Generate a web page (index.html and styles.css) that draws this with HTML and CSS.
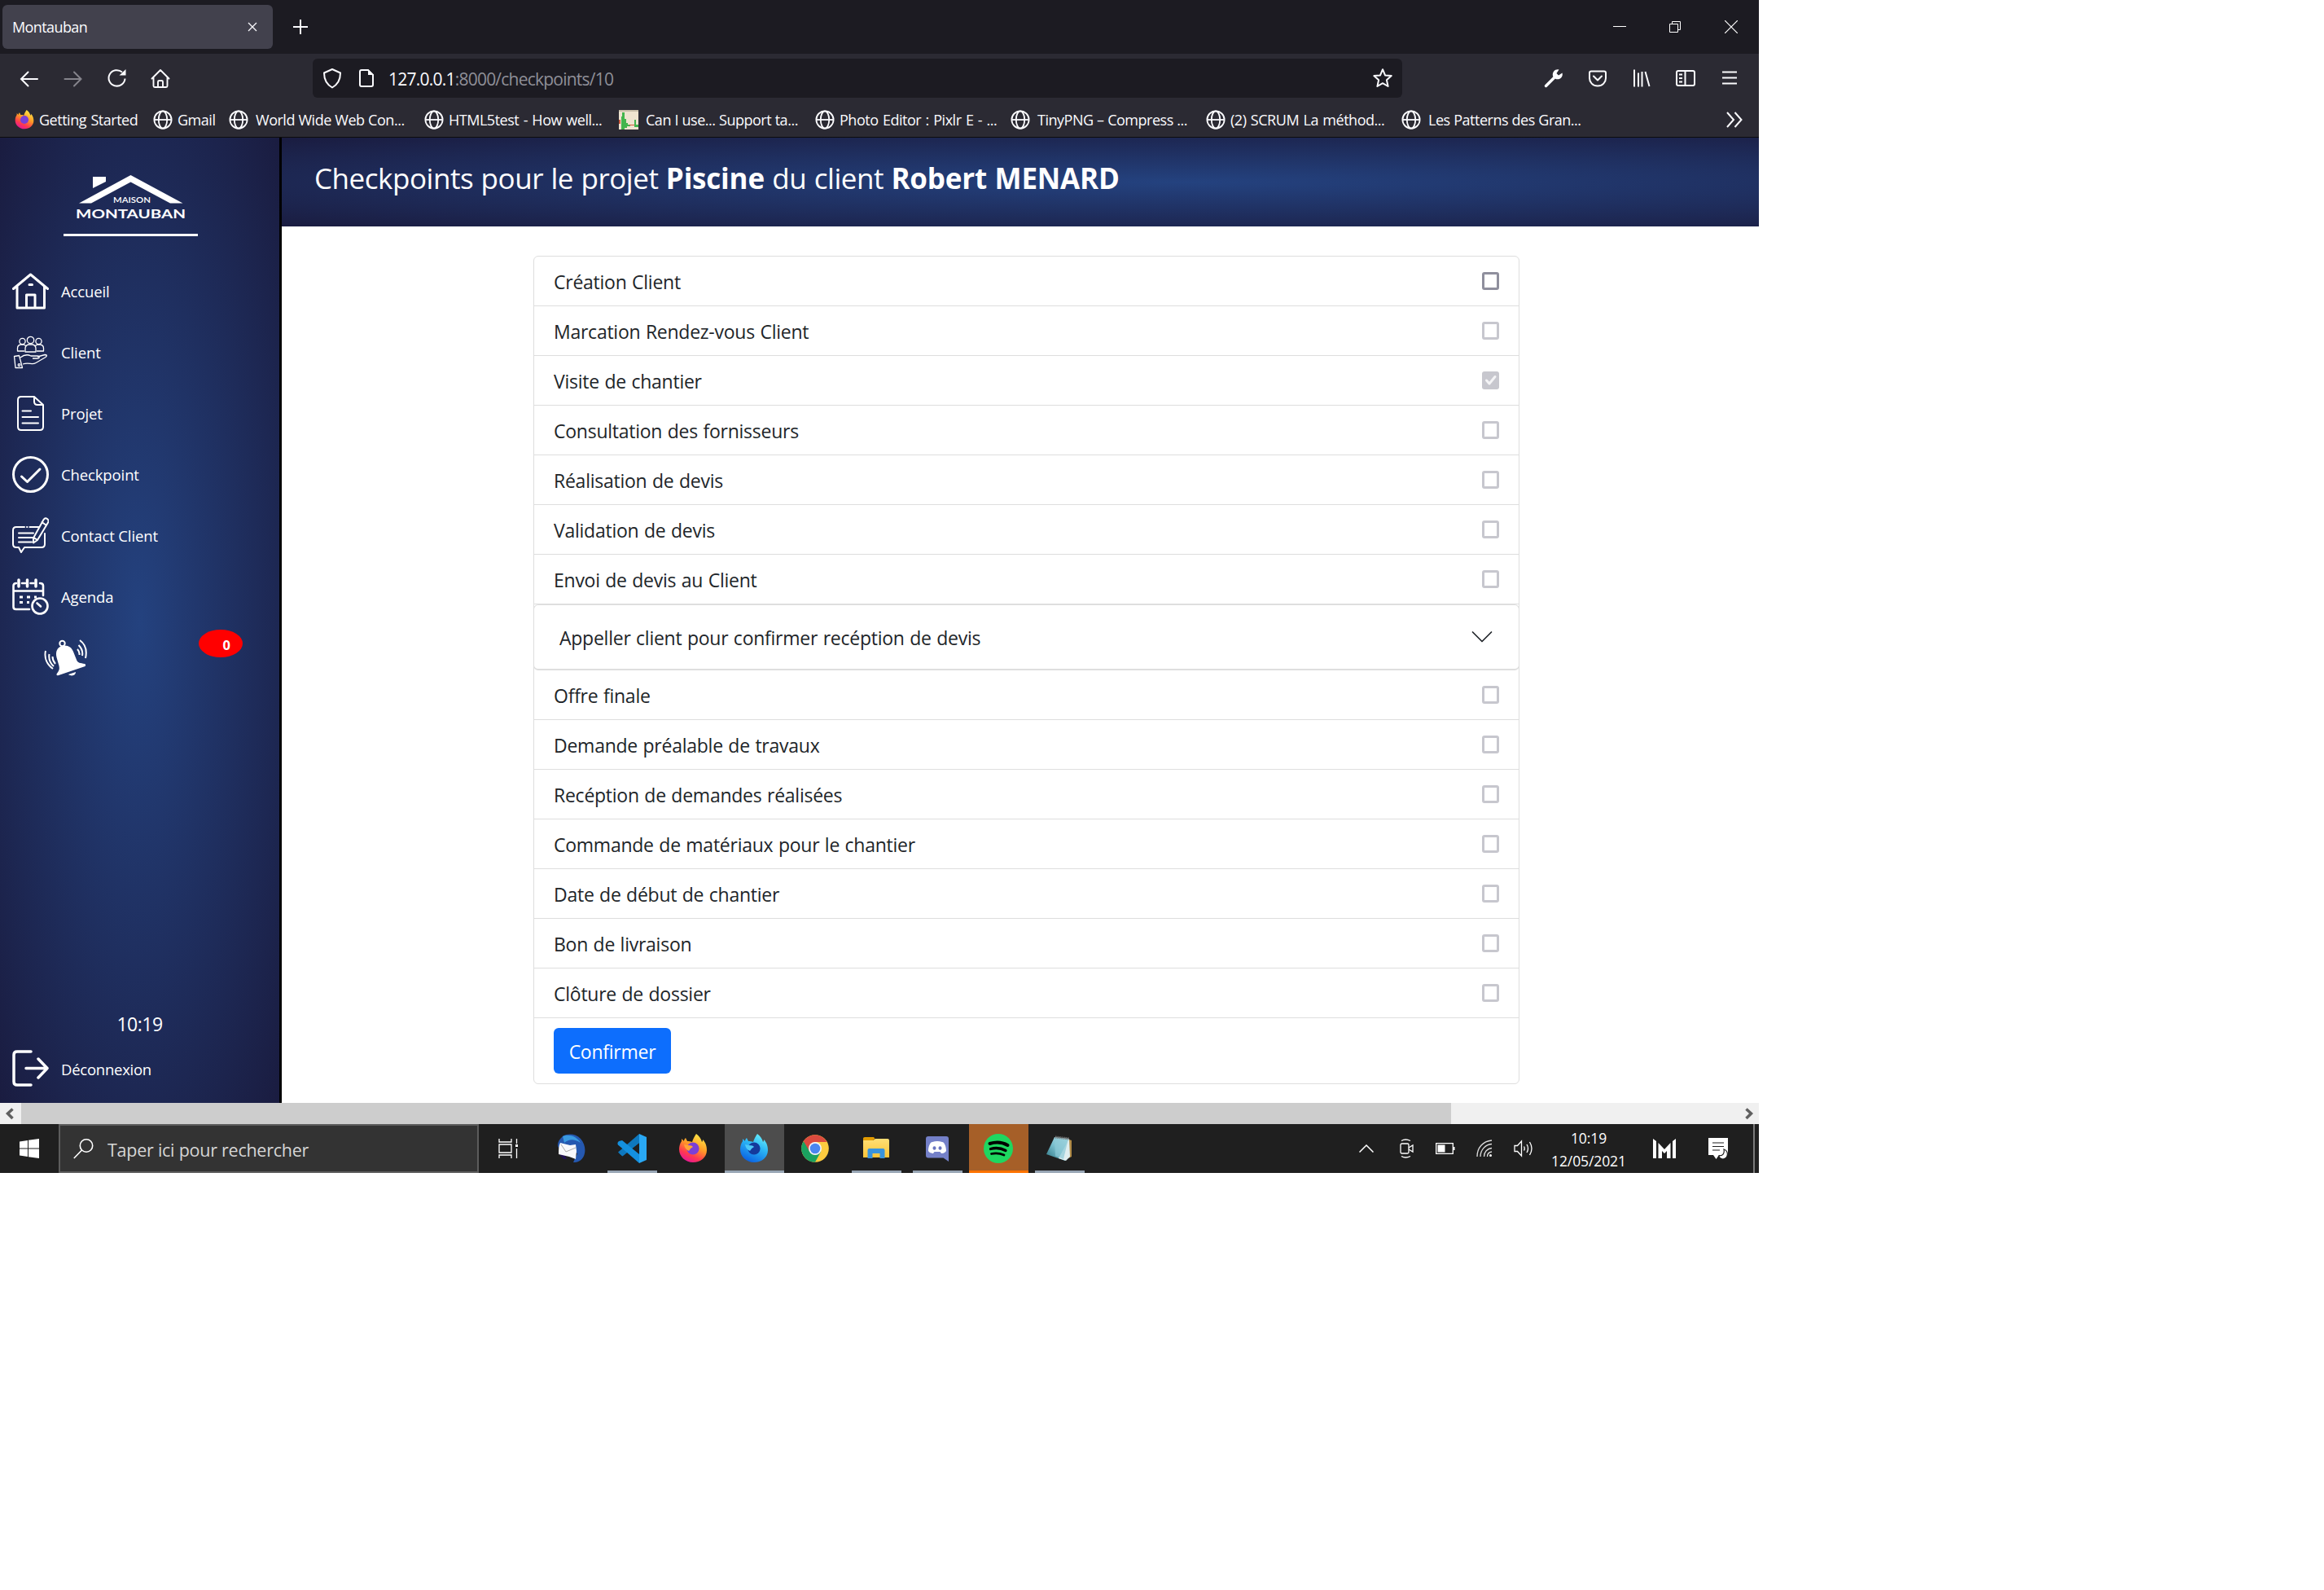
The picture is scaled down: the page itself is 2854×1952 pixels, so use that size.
FILE: index.html
```html
<!DOCTYPE html>
<html lang="fr">
<head>
<meta charset="utf-8">
<title>Montauban</title>
<link rel="stylesheet" href="styles.css">
</head>
<body>
<svg class="defs" width="0" height="0" aria-hidden="true">
  <defs>
    <linearGradient id="fire" x1=".8" y1="0" x2=".3" y2="1"><stop offset="0" stop-color="#fff04a"/><stop offset=".45" stop-color="#ff9a26"/><stop offset=".75" stop-color="#ff3a4e"/><stop offset="1" stop-color="#e5149a"/></linearGradient>
    <linearGradient id="ice" x1=".8" y1="0" x2=".3" y2="1"><stop offset="0" stop-color="#6df3fb"/><stop offset=".45" stop-color="#2ab4f5"/><stop offset="1" stop-color="#0a5fe0"/></linearGradient>
    <linearGradient id="pad" x1="1" y1="0" x2="0" y2="1"><stop offset="0" stop-color="#c9eaf0"/><stop offset=".5" stop-color="#7cc0cf"/><stop offset="1" stop-color="#27717f"/></linearGradient>
    <linearGradient id="fold" x1="0" y1="0" x2="0" y2="1"><stop offset="0" stop-color="#ffdf75"/><stop offset="1" stop-color="#fcc438"/></linearGradient>
    <symbol id="globe" viewBox="0 0 24 24"><g fill="none" stroke="#fbfbfe" stroke-width="1.8"><circle cx="12" cy="12" r="10.6"/><ellipse cx="12" cy="12" rx="5.2" ry="10.6"/><path d="M1.4 12h21.2"/></g></symbol>
    <symbol id="fox" viewBox="0 0 36 36">
      <path d="M22 0c4 3 6 6 7 10 1-1 1-2 1-3 4 4 5 9 5 13 0 9-8 15-17 15S1 28 1 19c0-4 1-7 3-10V6l3 3c0-2 1-3 2-4l2 4c2 0 4 0 6 1 1-4 3-7 5-10z"/>
    </symbol>
    <symbol id="foxcore" viewBox="0 0 36 36"><circle cx="18" cy="18" r="7.6"/></symbol>
  </defs>
</svg>
<div class="desktop">
  <div class="browser">
    <div class="tabbar">
      <div class="tab"><span>Montauban</span>
        <svg width="12" height="12" viewBox="0 0 12 12"><path d="M1 1l10 10M11 1L1 11" stroke="#fbfbfe" stroke-width="1.3"/></svg>
      </div>
      <svg class="newtab" width="18" height="18" viewBox="0 0 18 18"><path d="M9 0v18M0 9h18" stroke="#fbfbfe" stroke-width="2"/></svg>
      <div class="winctl">
        <svg width="16" height="16" viewBox="0 0 16 16"><path d="M0 7.500h16" stroke="#fff"/></svg>
        <svg width="16" height="16" viewBox="0 0 16 16"><path d="M.5 4.500h10v10h-10zM3.500 4.500v-3h10v10h-3" fill="none" stroke="#fff"/></svg>
        <svg width="16" height="16" viewBox="0 0 16 16"><path d="M0 0l16 16M16 0L0 16" stroke="#fff" stroke-width="1.2"/></svg>
      </div>
    </div>
    <div class="navbar">
      <div class="navbtns">
        <svg width="24" height="24" viewBox="0 0 24 24" fill="none" stroke="#fbfbfe" stroke-width="2" stroke-linecap="round"><path d="M22 13H2M10.500 4.500L2 13l8.500 8.500"/></svg>
        <svg width="24" height="24" viewBox="0 0 24 24" fill="none" stroke="#85848c" stroke-width="2" stroke-linecap="round"><path d="M1.500 13h20M13 4.500l8.500 8.500-8.500 8.500"/></svg>
        <svg width="24" height="24" viewBox="0 0 24 24" fill="none" stroke="#fbfbfe" stroke-width="2"><path d="M22.500 12.500A10 9.700 0 1 1 19 4.500"/><path d="M23.500 1v7.500h-8z" fill="#fbfbfe" stroke="none"/></svg>
        <svg width="24" height="24" viewBox="0 0 24 24" fill="none" stroke="#fbfbfe" stroke-width="1.900" stroke-linejoin="round" stroke-linecap="round"><path d="M1.500 12.500L12 2l10.500 10.500M3.500 11v10.500q0 1.500 1.500 1.500h14q1.500 0 1.500-1.500V11M9 23v-6.500q0-1.500 1.500-1.500h3q1.500 0 1.500 1.500V23"/></svg>
      </div>
      <div class="urlbar">
        <svg width="24" height="26" viewBox="0 0 24 26"><path d="M12 2L22 6.500c0 8-3 14-10 18C5 20.500 2 14.500 2 6.500z" fill="none" stroke="#fbfbfe" stroke-width="2" stroke-linejoin="round"/></svg>
        <svg class="doc" width="20" height="24" viewBox="0 0 20 24"><path d="M12 2H4Q2 2 2 4v16q0 2 2 2h12q2 0 2-2V8z" fill="none" stroke="#fbfbfe" stroke-width="2"/><path d="M12 1v7h7z" fill="#fbfbfe"/></svg>
        <span class="url"><b>127.0.0.1</b>:8000/checkpoints/10</span>
        <svg class="star" width="26" height="26" viewBox="0 0 26 26"><path d="M13 2.200l3 7.200 7.700.7-5.800 5.200 1.700 7.700L13 19.200 6.400 23l1.700-7.700-5.800-5.200 7.700-.7z" fill="none" stroke="#fbfbfe" stroke-width="2" stroke-linejoin="round"/></svg>
      </div>
      <div class="tools">
        <svg width="24" height="24" viewBox="0 0 24 24"><path d="M2.500 21.500L13 11" stroke="#fbfbfe" stroke-width="3.500" stroke-linecap="round"/><path d="M18.500 1.500l-3 4.500 2.500 2.500L22.500 5.500c1.500 5-3 9-8 7.500l-3.500-3.500C10 4 14 .500 18.500 1.500z" fill="#fbfbfe"/></svg>
        <svg width="24" height="24" viewBox="0 0 24 24" fill="none" stroke="#fbfbfe" stroke-width="2" stroke-linecap="round" stroke-linejoin="round"><path d="M4 3.500h16q2 0 2 2V12c0 5-4 9.500-10 9.500S2 17 2 12V5.500q0-2 2-2zM7 9.500l5 5 5-5"/></svg>
        <svg width="24" height="24" viewBox="0 0 24 24" fill="none" stroke="#fbfbfe" stroke-width="2"><path d="M3 1.500v21M8 5.500v17M12.500 4v18.500M16.500 4l5 18"/></svg>
        <svg width="26" height="24" viewBox="0 0 26 24" fill="none" stroke="#fbfbfe" stroke-width="2"><rect x="1" y="3" width="22" height="18" rx="2"/><path d="M11.500 3v18M4 7.500h4M4 12h4M4 16.500h4"/></svg>
        <svg width="24" height="24" viewBox="0 0 24 24"><path d="M1 4.500h18M1 11.500h18M1 18.500h18" stroke="#fbfbfe" stroke-width="2"/></svg>
      </div>
    </div>
    <div class="bookmarks">
      <a><svg width="24" height="24"><use href="#fox" fill="url(#fire)"/><use href="#foxcore" fill="#7b3fd6"/></svg><span>Getting Started</span></a>
      <a><svg width="24" height="24"><use href="#globe"/></svg><span>Gmail</span></a>
      <a class="wide"><svg width="24" height="24"><use href="#globe"/></svg><span>World Wide Web Con...</span></a>
      <a><svg width="24" height="24"><use href="#globe"/></svg><span>HTML5test - How well...</span></a>
      <a class="wide"><svg width="24" height="24" viewBox="0 0 24 24"><path fill="#eee3cf" d="M0 0h24v24H0z"/><path fill="#c8bda8" d="M0 0h24v2H0z"/><path fill="#43b54d" d="M3 24V8h1V3h3v8h2v5h2v2h3v2h-4v2H7v2zM19 20v-8h2v6h3v3h-5z"/><path fill="#cf5a3c" d="M0 12h2v5H0zM13 18h6v1h-6z"/></svg><span>Can I use... Support ta...</span></a>
      <a><svg width="24" height="24"><use href="#globe"/></svg><span>Photo Editor : Pixlr E - ...</span></a>
      <a class="wide"><svg width="24" height="24"><use href="#globe"/></svg><span>TinyPNG – Compress ...</span></a>
      <a><svg width="24" height="24"><use href="#globe"/></svg><span>(2) SCRUM La méthod...</span></a>
      <a class="wide"><svg width="24" height="24"><use href="#globe"/></svg><span>Les Patterns des Gran...</span></a>
      <svg class="more" width="20" height="20" viewBox="0 0 20 20"><path d="M1 1l8 9-8 9M10.500 1l8 9-8 9" fill="none" stroke="#fbfbfe" stroke-width="2"/></svg>
    </div>
  </div>

  <div class="page">
    <aside class="sidebar">
      <svg class="logo" width="170" height="80" viewBox="0 0 170 80">
        <path d="M36 4h16v6L36 18z" fill="#fff"/>
        <path d="M82.500 2l64 34.500h-15.500L82.500 10.500 34 36.500H19z" fill="#fff"/>
        <text x="84" y="35.500" text-anchor="middle" textLength="46" lengthAdjust="spacingAndGlyphs" class="logo-sm">MAISON</text>
        <text x="82.500" y="54.500" text-anchor="middle" textLength="135" lengthAdjust="spacingAndGlyphs" class="logo-lg">MONTAUBAN</text>
        <path d="M0 75.500h165" stroke="#fff" stroke-width="3"/>
      </svg>
      <nav class="menu">
        <a><svg width="45" height="45" viewBox="0 0 45 45" fill="none" stroke="#fff" stroke-width="3" stroke-linecap="round" stroke-linejoin="round"><path d="M1.500 19.500L22.500 2l21 17.500M6 17v26h33.500V17M17.500 43V27h10.500v16M21 14.500h3.500"/></svg><span>Accueil</span></a>
        <a><svg width="45" height="45" viewBox="0 0 45 45" fill="none" stroke="#fff" stroke-width="1.300" stroke-linejoin="round"><circle cx="22.500" cy="7.500" r="4.200"/><circle cx="12.500" cy="9" r="3.600"/><circle cx="32.500" cy="9" r="3.600"/><path d="M16 22v-4c0-3 2-4.500 4-5h5c2 .5 4 2 4 5v4zM15 21H6.500v-3.500c0-2.500 1.500-4 4-4.500h4l2 1.500M30 21h8.500v-3.500c0-2.500-1.500-4-4-4.500h-4l-2 1.500M2.500 27.500l6-1 4 15H4zM10 29c5-4 9-4 13-2h8c3 0 3 3 0 3h-6M31 28l9-2.500c3 0 3 1.500 1 3l-12 7c-5 3-8-1-16 1.500"/><circle cx="8.500" cy="38" r="1.300"/></svg><span>Client</span></a>
        <a><svg width="45" height="45" viewBox="0 0 45 45" fill="none" stroke="#fff" stroke-width="2" stroke-linecap="round" stroke-linejoin="round"><path d="M27 2H11Q7 2 7 6v33q0 4 4 4h23q4 0 4-4V12zM27 2v6q0 4 4 4h7M12.500 19.500H23M12.500 27H32M12.500 34.500H32"/></svg><span>Projet</span></a>
        <a><svg width="45" height="45" viewBox="0 0 45 45" fill="none" stroke="#fff" stroke-width="3" stroke-linecap="round" stroke-linejoin="round"><circle cx="22.500" cy="22.500" r="21"/><path d="M11.500 25l7 6.500L34 16"/></svg><span>Checkpoint</span></a>
        <a><svg width="45" height="45" viewBox="0 0 45 45" fill="none" stroke="#fff" stroke-width="2" stroke-linecap="round" stroke-linejoin="round"><path d="M15 12H5q-4 0-4 4v17q0 4 4 4h3l3 6 4-6h21q4 0 4-4V20M21.500 12h11M18 12h.5M8 19.500h18M8 25h17M8 30.500h16M26 25.500L38.500 3q2-3 4.500-1t1 4.500L31 28l-5 3.500zM36.500 6l5.500 4M26.500 25l4.500 3"/></svg><span>Contact Client</span></a>
        <a><svg width="45" height="45" viewBox="0 0 45 45" fill="none" stroke="#fff" stroke-width="2.600" stroke-linecap="round"><path d="M5 6Q1.500 6 1.500 9v26q0 3 3 3H21M12 6h4M22.500 6h4M34 6q4 0 4 3v12M2 15.500h36"/><path d="M8 2v8M18.500 2v8M29 2v8" stroke-width="3.500"/><path d="M9 23h4M18 23h4M27 23h3M9 29.500h4M18 29.500h3" stroke-width="3" stroke-linecap="butt"/><circle cx="34" cy="34" r="9.500"/><path d="M30.500 30.500L35 34.500"/></svg><span>Agenda</span></a>
        <div class="alerts">
          <svg width="54" height="46" viewBox="0 0 54 46"><g fill="none" stroke="#fff" stroke-width="2"><circle cx="22.500" cy="5" r="3.200"/><path d="M2 14c-2 9 2 17 9 22M6.500 18c-1 6 1 11 5.500 15M10.500 21q0 5 3.500 9M44 1c7 5 9 13 7 22M42.500 7c4 4 5.500 8 4.500 13M41 12q3 3 2.500 7"/></g><path d="M22 8c6-2 12 1 14 7l4 10c1 4 5 4 10 5q2 1 .5 3L18 44q-3 1-2.500-1.500c3-4 4-6 3-10L15.500 22C14 15 16 10 22 8z" fill="#fff"/><path d="M30 43l9-3c0 4-5 6-9 3z" fill="#fff"/></svg>
          <span class="badge">0</span>
        </div>
      </nav>
      <div class="clock">10:19</div>
      <a class="logout"><svg width="45" height="45" viewBox="0 0 45 45" fill="none" stroke="#fff" stroke-width="3.500" stroke-linecap="round" stroke-linejoin="round"><path d="M23 2H6Q2 2 2 6v33q0 4 4 4h17M17 22.500h26M32 11l11 11.500L32 34"/></svg><span>Déconnexion</span></a>
    </aside>
    <main class="main">
      <header class="head"><h1>Checkpoints pour le projet <b>Piscine</b> du client <b>Robert MENARD</b></h1></header>
      <div class="list">
        <div class="row"><span>Création Client</span><i class="box on"></i></div>
        <div class="row"><span>Marcation Rendez-vous Client</span><i class="box"></i></div>
        <div class="row"><span>Visite de chantier</span><i class="box checked"><svg width="21" height="21" viewBox="0 0 21 21"><path d="M5.500 11l3.500 4 7-8.500" fill="none" stroke="#f4f4f6" stroke-width="3" stroke-linecap="round" stroke-linejoin="round"/></svg></i></div>
        <div class="row"><span>Consultation des fornisseurs</span><i class="box"></i></div>
        <div class="row"><span>Réalisation de devis</span><i class="box"></i></div>
        <div class="row"><span>Validation de devis</span><i class="box"></i></div>
        <div class="row"><span>Envoi de devis au Client</span><i class="box"></i></div>
        <div class="accordion"><span>Appeller client pour confirmer recéption de devis</span><svg width="26" height="16" viewBox="0 0 26 16"><path d="M1.500 2L13 13.500 24.500 2" fill="none" stroke="#212529" stroke-width="1.700" stroke-linecap="round" stroke-linejoin="round"/></svg></div>
        <div class="row"><span>Offre finale</span><i class="box"></i></div>
        <div class="row"><span>Demande préalable de travaux</span><i class="box"></i></div>
        <div class="row"><span>Recéption de demandes réalisées</span><i class="box"></i></div>
        <div class="row"><span>Commande de matériaux pour le chantier</span><i class="box"></i></div>
        <div class="row"><span>Date de début de chantier</span><i class="box"></i></div>
        <div class="row"><span>Bon de livraison</span><i class="box"></i></div>
        <div class="row"><span>Clôture de dossier</span><i class="box"></i></div>
        <div class="submit"><button class="btn">Confirmer</button></div>
      </div>
    </main>
  </div>

  <div class="scrollbar">
    <svg class="arrow" width="26" height="26" viewBox="0 0 26 26"><path d="M15.500 7.500L9.500 13l6 6" fill="none" stroke="#606060" stroke-width="3.500"/></svg>
    <div class="thumb"></div>
    <svg class="arrow right" width="26" height="26" viewBox="0 0 26 26"><path d="M10.500 7.500l6 5.500-6 6" fill="none" stroke="#606060" stroke-width="3.500"/></svg>
  </div>

  <div class="taskbar">
    <div class="start"><svg width="24" height="24" viewBox="0 0 24 24" fill="#fff"><path d="M0 3.500l10-1.500v9.500H0zM11 1.800L24 0v11.500H11zM0 12.500h10V22L0 20.500zM11 12.500h13V24l-13-1.800z"/></svg></div>
    <div class="search"><svg width="25" height="25" viewBox="0 0 25 25" fill="none" stroke="#fff" stroke-width="1.600"><circle cx="16" cy="8.500" r="7.700"/><path d="M10.500 14L.8 24"/></svg><span>Taper ici pour rechercher</span></div>
    <div class="taskview"><svg width="24" height="24" viewBox="0 0 24 24" fill="none" stroke="#fff" stroke-width="1.300"><path d="M1 0v4h15V0M1 7h15v10H1zM1 24v-4h15v4M22.500 0v6M22.500 12v12"/><path d="M21 7h3v3h-3z" fill="#fff" stroke="none"/></svg></div>
    <div class="apps">
      <div class="app"><svg width="36" height="36" viewBox="0 0 36 36"><path d="M8 3C15-1 24 0 30 6c6 7 7 16 3 23-3 4-6 6-12 6L26 24 8 20C0 18 0 10 8 3z" fill="#2558b0"/><path d="M8 3c8-3 17 0 22 8-8-5-14-5-20 0z" fill="#3a9ae0"/><path d="M3 24l6 7 4 0-4-7z" fill="#201050"/><path d="M5 11l12 3 7-1 1 8-1 10-8-3-13-3c0-6 0-10 2-14z" fill="#f8f8fb"/><path d="M6 13l6 9 12-5" fill="none" stroke="#aaa" stroke-width="1"/></svg></div>
      <div class="app run"><svg width="36" height="36" viewBox="0 0 36 36"><path d="M2.500 24L27 2v9L6 27z" fill="#0f7fc8"/><path d="M2.500 24l4 3.500L27 11V0L1 22.500z" fill="#0e78be"/><path d="M2 9l4-1 21 17v11L1 13.500Q-.5 11 2 9z" fill="#1490df"/><path d="M27 0l9 4v28l-9 4z" fill="#29a8f4"/></svg></div>
      <div class="app"><svg width="36" height="36"><use href="#fox" fill="url(#fire)"/><use href="#foxcore" fill="#7b3fd6"/><path d="M7 13l5 1q5 0 6 2-4 2-5 5-5-2-6-8z" fill="#ffa436"/></svg></div>
      <div class="app active"><svg width="36" height="36"><use href="#fox" fill="url(#ice)"/><use href="#foxcore" fill="#153a9c"/><path d="M7 13l5 1q5 0 6 2-4 2-5 5-5-2-6-8z" fill="#4cc9f8"/></svg></div>
      <div class="app"><svg width="34" height="34" viewBox="0 0 34 34"><circle cx="17" cy="17" r="16.800" fill="#fdcb3f"/><path d="M17 17L2.500 8.500A16.800 16.800 0 0 0 17 33.800L24 21z" fill="#1aa260"/><path d="M17 9h14.600A16.800 16.800 0 0 0 2.800 8l7 12z" fill="#db4a3e"/><circle cx="17" cy="17" r="8" fill="#f5f5f5"/><circle cx="17" cy="17" r="6.300" fill="#4a86f0"/></svg></div>
      <div class="app run"><svg width="34" height="30" viewBox="0 0 34 30"><path d="M1 5h12l3-2h15q2 0 2 2v21H1z" fill="url(#fold)"/><path d="M1 5V2.500Q1 1 3 1h11l1.500 2L13 5z" fill="#e29c00"/><path d="M6.500 27V17q0-2 2-2h17q2 0 2 2v10h-6v-6h-9v6z" fill="#3993dc"/></svg></div>
      <div class="app run"><svg width="30" height="32" viewBox="0 0 30 32"><path d="M4 1h22q3 0 3 3v28l-6.500-4.500H4q-3 0-3-3V4q0-3 3-3z" fill="#7480c8"/><path d="M9 8q6-2 12 0c3 0 5 6 5 11-2 3-5 3-6 3l-1.500-2h-7L10 22c-1 0-4 0-6-3 0-5 2-11 5-11z" fill="#fff"/><ellipse cx="11.500" cy="15.500" rx="2" ry="2.200" fill="#6a76c0"/><ellipse cx="18.500" cy="15.500" rx="2" ry="2.200" fill="#6a76c0"/></svg></div>
      <div class="app music"><svg width="36" height="36" viewBox="0 0 36 36"><circle cx="18" cy="18" r="18" fill="#1ed760"/><g fill="none" stroke="#000" stroke-linecap="round"><path d="M7.500 12c8-2.500 16-1.500 22 2" stroke-width="4"/><path d="M8.500 18.500c7-2 13-1 18.500 2" stroke-width="3.300"/><path d="M9.500 24.500c6-1.500 11-.5 15.500 1.500" stroke-width="2.800"/></g></svg></div>
      <div class="app run"><svg width="34" height="34" viewBox="0 0 34 34"><path d="M29 6l3 1v20l-4 2z" fill="#b08a45"/><path d="M11 3l18 2-5 27L1 24z" fill="url(#pad)"/><path d="M29 5l1 22-5 5-9-3z" fill="#dfeef0"/><path d="M11 3l17 2-6 25-10-4z" fill="#8cc9d6" opacity=".7"/><path d="M12 3l17 2" stroke="#777" stroke-width="3" stroke-dasharray="1.500 1"/></svg></div>
    </div>
    <div class="tray">
      <svg width="18" height="10" viewBox="0 0 18 10"><path d="M.5 9.500L9 1l8.500 8.500" fill="none" stroke="#fff" stroke-width="1.500"/></svg>
      <svg class="t2" width="18" height="24" viewBox="0 0 18 24" fill="none" stroke="#fff" stroke-width="1.300"><rect x="1" y="6" width="10" height="12" rx="1.500"/><path d="M11 11l5-3v8l-5-3M2 2.500q5-3 11 0M2 21.500q5 3 11 0"/></svg>
      <svg class="t3" width="24" height="14" viewBox="0 0 24 14"><path d="M.7.700h20.600v12.600H.7z" fill="none" stroke="#fff" stroke-width="1.300"/><path d="M2.500 2.500h9v9h-9zM22 5h1.500v4H22z" fill="#fff"/></svg>
      <svg class="t4" width="20" height="22" viewBox="0 0 20 22" fill="none" stroke="#ddd" stroke-width="1.300"><path d="M1 21C1 10 8 2 19 1M5 21C5 13 11 6 19 5.500M9.500 21c0-6 4-10 9.500-10.500M13.500 21c0-3 2-5.500 5.500-6"/><circle cx="17.500" cy="19.500" r="1.500" fill="#fff" stroke="none"/></svg>
      <svg class="t5" width="24" height="22" viewBox="0 0 24 22" fill="none" stroke="#fff" stroke-width="1.300"><path d="M1 7.500h3.500L9.500 2v18l-5-5.500H1zM12.500 8.500q1.500 2.500 0 5M16 6q3 5 0 10M19.500 3q5 8 0 16"/></svg>
      <div class="datetime"><span>10:19</span><span>12/05/2021</span></div>
      <svg class="t6" width="28" height="24" viewBox="0 0 28 24" fill="#fff"><path d="M0 0l4 3v21H0zM28 0l-4 3v21h4zM6.500 5L14 13l7.500-8v19h-4.500V15l-3 3-3-3v9H6.500z"/></svg>
      <svg class="t7" width="26" height="26" viewBox="0 0 26 26"><path d="M0 0h24v21H13l-3.500 5L6 21H0z" fill="#fff"/><path d="M5 6h14M5 10.500h14M5 15h9" stroke="#1f1f1f" stroke-width="1.200"/><path d="M19 14c6 2 6 11-1 12-3 0-5-2-5-4 5 0 7-3 6-8z" fill="#fff" stroke="#1f1f1f" stroke-width="1.200"/></svg>
      <div class="peek"></div>
    </div>
  </div>
</div>
</body>
</html>
```
FILE: styles.css
```css
* { box-sizing: border-box; }
body { margin: 0; background: #fff; font-family: "Open Sans", "Noto Sans", sans-serif; }
svg { display: block; flex: none; }
.defs { position: absolute; }
.desktop { width: 2160px; height: 1440px; display: flex; flex-direction: column; overflow: hidden; }

/* browser chrome */
.browser { height: 169px; background: #2b2a33; border-bottom: 1px solid #0c0c0d; color: #fbfbfe; font-size: 18px; flex: none; }
.tabbar { height: 66px; background: #1c1b22; display: flex; align-items: center; padding-left: 3px; }
.tab { width: 332px; height: 54px; background: #42414d; border-radius: 6px; display: flex; align-items: center; justify-content: space-between; padding: 0 19px 0 12px; letter-spacing: -.6px; }
.newtab { margin-left: 25px; }
.winctl { margin-left: auto; display: flex; gap: 52.500px; padding-right: 26px; }
.navbar { height: 60px; display: flex; align-items: center; }
.navbtns { display: flex; gap: 29.500px; padding-left: 24px; width: 384px; }
.urlbar { width: 1338px; height: 48px; background: #1c1b22; border-radius: 6px; display: flex; align-items: center; padding: 0 11px 0 12px; }
.doc { margin-left: 20px; }
.url { margin-left: 17px; font-size: 21px; letter-spacing: -.77px; color: #8f8f98; white-space: nowrap; padding-top: 1px; }
.url b { color: #fbfbfe; font-weight: 400; }
.star { margin-left: auto; }
.tools { display: flex; gap: 30px; padding-left: 174px; }
.bookmarks { height: 42px; padding: 0 0 1px 18px; display: grid; grid-template-columns: 170px 93px 240px 239px 241px 240px 240px 240px 399px 20px; align-items: center; }
.bookmarks a { display: flex; align-items: center; gap: 6px; white-space: nowrap; letter-spacing: -.48px; word-spacing: 1.2px; }
.bookmarks a.wide { gap: 9px; word-spacing: .3px; }

/* application */
.page { height: 1185px; display: flex; flex: none; }
.sidebar { width: 346px; border-right: 3px solid #000; background: radial-gradient(#24427f, #1a1c40); color: #fff; font-size: 18.500px; display: flex; flex-direction: column; }
.logo { margin: 44px 0 0 78px; }
.logo-sm { font: 600 9px Lato, sans-serif; fill: #fff; }
.logo-lg { font: 700 16px Lato, sans-serif; fill: #fff; }
.menu { margin-top: 27px; display: flex; flex-direction: column; }
.menu a, .logout { height: 75px; display: flex; align-items: center; gap: 15px; padding-left: 15px; letter-spacing: -.12px; }
.alerts { height: 75px; display: flex; justify-content: space-between; align-items: center; padding: 0 45px 0 54px; }
.badge { width: 54px; height: 34px; border-radius: 50%; background: red; font-size: 16.500px; font-weight: 700; line-height: 38px; text-align: right; padding-right: 15px; margin-bottom: 35px; }
.clock { margin: auto 0 0; font-size: 23px; line-height: 36px; text-align: center; letter-spacing: -.5px; }
.logout { height: 45px; margin: 14px 0 20px; letter-spacing: -.25px; }
.logout span { padding-top: 2px; }
.main { flex: 1; min-width: 0; overflow: hidden; }
.head { width: 2214px; height: 109px; background: radial-gradient(#24427f, #1a1c40); color: #fff; padding: 23px 0 0 40px; }
.head h1 { margin: 0; font-size: 35px; line-height: 54px; font-weight: 400; letter-spacing: -.46px; word-spacing: .8px; white-space: nowrap; }
.head b { font-weight: 700; letter-spacing: -.2px; }
.list { width: 1211px; margin: 36px 0 0 309px; border: 1px solid #dedede; border-radius: 6px; color: #212529; font-size: 23px; letter-spacing: -.25px; word-spacing: .8px; }
.row { height: 61px; border-bottom: 1px solid #dedede; padding: 1px 24px 0; display: flex; justify-content: space-between; align-items: center; }
.row span { padding-top: 1px; }
.box { width: 21px; height: 22px; border: 3px solid #c7c7ce; border-radius: 3px; margin-top: -1px; }
.box.on { border-color: #8f8f9d; }
.box.checked { border: 0; background: #c7c7ce; }
.accordion { height: 81px; margin: 0 -1px; border: 1px solid #dedede; border-bottom-width: 2px; border-radius: 6px; display: flex; align-items: center; justify-content: space-between; padding: 1px 32px 0 31px; }
.accordion svg { margin-top: -1px; }
.submit { height: 80px; padding: 12px 24px; }
.btn { width: 144px; height: 56px; border: 0; border-radius: 6px; background: #0d6efd; color: #fff; font: inherit; letter-spacing: inherit; padding: 1px 0 0; }

/* horizontal scrollbar */
.scrollbar { height: 26px; background: #f0f0f0; display: flex; flex: none; }
.thumb { width: 1756px; background: #cdcdcd; }
.right { margin-left: auto; }

/* taskbar */
.taskbar { height: 60px; background: #1f1f1f; color: #fff; display: flex; flex: none; }
.start { width: 72px; display: flex; align-items: center; padding-left: 24px; }
.search { width: 516px; background: #333; border: 2px solid #5c5c5c; display: flex; align-items: center; gap: 17px; padding-left: 16px; font-size: 21.500px; letter-spacing: -.25px; color: #d6d6d6; }
.search span { padding-top: 2px; }
.taskview { width: 76px; display: flex; align-items: center; padding-left: 24px; }
.apps { display: flex; }
.app { width: 75px; height: 60px; display: flex; align-items: center; justify-content: center; padding-right: 2px; }
.run { background: linear-gradient(#98a6b5, #98a6b5) 50% 100% / 61px 3px no-repeat; }
.active { background: #4d4d4d; border-bottom: 3px solid #98a6b5; width: 73px; margin: 0 1px; padding-top: 3px; }
.music { background: #a65f28; border-bottom: 3px solid #ff7300; width: 73px; margin: 0 1px; padding-top: 3px; }
.tray { margin-left: auto; width: 491px; display: flex; align-items: center; }
.t2 { margin-left: 32px; }
.t3 { margin-left: 26px; }
.t4 { margin-left: 26px; }
.t5 { margin-left: 26px; }
.datetime { width: 92px; margin-left: 22px; display: flex; flex-direction: column; align-items: center; font-size: 17.500px; line-height: 28px; letter-spacing: -.1px; padding-top: 1px; }
.t6 { margin-left: 33px; }
.t7 { margin-left: 40px; }
.peek { width: 2px; height: 60px; background: #7a7a7a; margin-left: 29px; }
```
